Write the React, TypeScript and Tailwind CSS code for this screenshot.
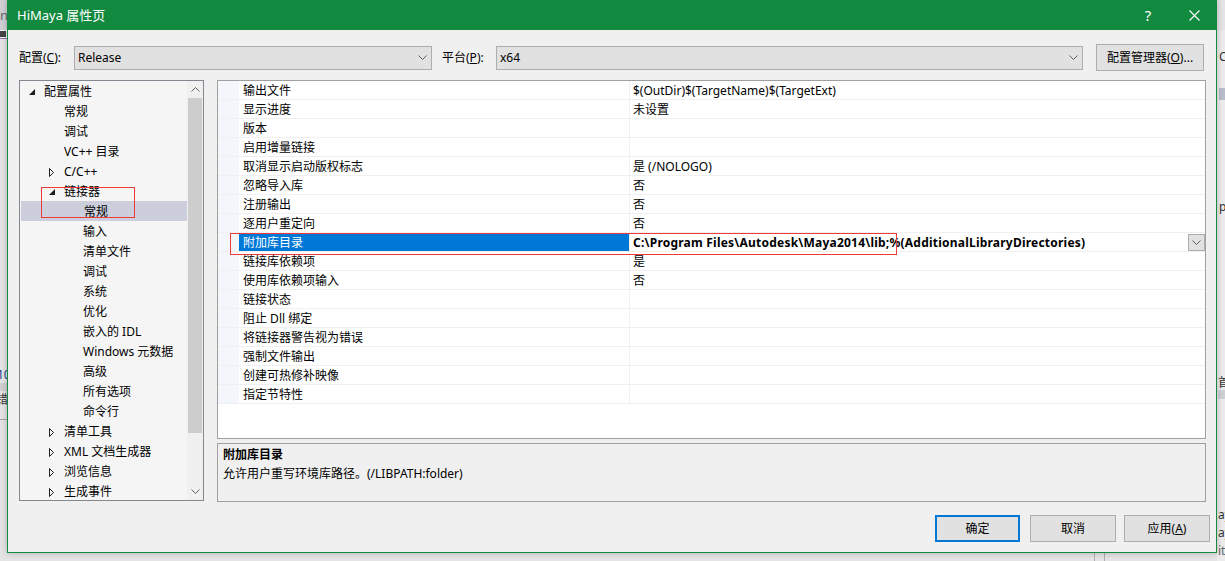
import React from "react";

const FONT = "font-['Noto_Sans','Noto_Sans_CJK_SC',sans-serif]";

type TreeItem = { label: string; level: 1 | 2 | 3; exp?: "open" | "closed"; selected?: boolean };

const tree: TreeItem[] = [
  { label: "配置属性", level: 1, exp: "open" },
  { label: "常规", level: 2 },
  { label: "调试", level: 2 },
  { label: "VC++ 目录", level: 2 },
  { label: "C/C++", level: 2, exp: "closed" },
  { label: "链接器", level: 2, exp: "open" },
  { label: "常规", level: 3, selected: true },
  { label: "输入", level: 3 },
  { label: "清单文件", level: 3 },
  { label: "调试", level: 3 },
  { label: "系统", level: 3 },
  { label: "优化", level: 3 },
  { label: "嵌入的 IDL", level: 3 },
  { label: "Windows 元数据", level: 3 },
  { label: "高级", level: 3 },
  { label: "所有选项", level: 3 },
  { label: "命令行", level: 3 },
  { label: "清单工具", level: 2, exp: "closed" },
  { label: "XML 文档生成器", level: 2, exp: "closed" },
  { label: "浏览信息", level: 2, exp: "closed" },
  { label: "生成事件", level: 2, exp: "closed" },
];

const levelPad: Record<number, string> = { 1: "pl-[9px]", 2: "pl-[29px]", 3: "pl-[48px]" };

const rows: { name: string; value: string; selected?: boolean }[] = [
  { name: "输出文件", value: "$(OutDir)$(TargetName)$(TargetExt)" },
  { name: "显示进度", value: "未设置" },
  { name: "版本", value: "" },
  { name: "启用增量链接", value: "" },
  { name: "取消显示启动版权标志", value: "是 (/NOLOGO)" },
  { name: "忽略导入库", value: "否" },
  { name: "注册输出", value: "否" },
  { name: "逐用户重定向", value: "否" },
  { name: "附加库目录", value: "C:\\Program Files\\Autodesk\\Maya2014\\lib;%(AdditionalLibraryDirectories)", selected: true },
  { name: "链接库依赖项", value: "是" },
  { name: "使用库依赖项输入", value: "否" },
  { name: "链接状态", value: "" },
  { name: "阻止 Dll 绑定", value: "" },
  { name: "将链接器警告视为错误", value: "" },
  { name: "强制文件输出", value: "" },
  { name: "创建可热修补映像", value: "" },
  { name: "指定节特性", value: "" },
];

function ChevronDown({ cls = "" }: { cls?: string }) {
  return (
    <svg width="9" height="5" viewBox="0 0 9 5" className={cls}>
      <path d="M0.5 0.5 L4.5 4.5 L8.5 0.5" fill="none" stroke="#606060" strokeWidth="1" />
    </svg>
  );
}

function OpenTri() {
  return (
    <svg width="6" height="6" viewBox="0 0 6 6">
      <path d="M6 0 L6 6 L0 6 Z" fill="#1e1e1e" />
    </svg>
  );
}

function ClosedTri() {
  return (
    <svg width="5" height="9" viewBox="0 0 5 9">
      <path d="M0.5 0.5 L4.5 4.5 L0.5 8.5 Z" fill="none" stroke="#1e1e1e" strokeWidth="1" />
    </svg>
  );
}

function Combo({ value, w }: { value: string; w: string }) {
  return (
    <div className={`${w} h-[24px] bg-[#e1e1e1] border border-[#adadad] flex items-center pl-[3px] pr-[4px]`}>
      <span className="flex-1 leading-[18px]">{value}</span>
      <ChevronDown />
    </div>
  );
}

function Button({ children, primary }: { children: React.ReactNode; primary?: boolean }) {
  return (
    <div
      className={`h-[27px] flex items-center justify-center bg-[#e1e1e1] ${
        primary ? "border-2 border-[#0078d7] w-[85px]" : "border border-[#adadad] w-[86px]"
      }`}
    >
      <span className="leading-[18px]">{children}</span>
    </div>
  );
}

export default function App() {
  return (
    <div className={`w-[1225px] h-[561px] bg-[#e4e4e4] relative overflow-hidden text-[12px] text-[#000] ${FONT}`}>
      {/* desktop background fragments */}
      <div className="absolute left-0 top-0 w-[8px] h-[30px] bg-[#cfd0d6] text-[#666] text-[13px] leading-[30px]">ni</div>
      <div className="absolute left-0 top-[30px] w-[8px] h-[9px] bg-[#f6f6f6] border-b border-[#9b6ab0]" />
      <div className="absolute left-0 top-[31px] w-[6px] h-[6px] bg-[#444]" />
      <div className="absolute left-0 top-[368px] text-[12px] leading-[14px] text-[#1a3d8f] -ml-[3px]">10</div>
      <div className="absolute left-0 top-[383px] w-[8px] h-[8px] bg-[#cfcfcf]" />
      <div className="absolute left-0 top-[393px] text-[12px] leading-[14px] -ml-[4px] text-[#333]">错</div>
      <div className="absolute left-0 top-[419px] w-[8px] h-[1px] bg-[#a0a0a0]" />
      <div className="absolute right-0 top-[30px] w-[8px] h-[531px] bg-[#ececec]" />
      <div className="absolute left-[1219px] top-[50px] text-[12px] leading-[14px] text-[#333]">C</div>
      <div className="absolute left-[1219px] top-[88px] w-[6px] h-[12px] bg-[#b9bccb]" />
      <div className="absolute left-[1219px] top-[200px] text-[12px] leading-[14px] text-[#333]">p</div>
      <div className="absolute left-[1218px] top-[376px] text-[12px] leading-[14px] text-[#333]">首</div>
      <div className="absolute left-[1218px] top-[390px] w-[7px] h-[9px] bg-[#cfcfd6]" />
      <div className="absolute left-[1218px] top-[508px] text-[12px] leading-[14px] text-[#333]">ay</div>
      <div className="absolute left-[1218px] top-[526px] text-[12px] leading-[14px] text-[#333]">ay</div>
      <div className="absolute left-[1218px] top-[544px] text-[12px] leading-[14px] text-[#666]">it</div>
      <div className="absolute left-[1094px] top-[553px] w-[1px] h-[8px] bg-[#b0b0b0]" />
      <div className="absolute left-[1104px] top-[553px] w-[1px] h-[8px] bg-[#b0b0b0]" />

      {/* dialog window */}
      <div className="relative ml-[7px] w-[1210px] h-[553px] bg-[#f0f0f0] border-x border-b border-[#168a43] flex flex-col shadow-[0_0_6px_rgba(0,0,0,0.25)]">
        {/* title bar */}
        <div className="h-[30px] -mx-[1px] bg-[#11893f] flex items-center text-white">
          <span className="pl-[10px] text-[13px] leading-[18px]">HiMaya 属性页</span>
          <div className="ml-auto flex h-full">
            <div className="w-[46px] h-full flex items-center justify-center text-[15px]">?</div>
            <div className="w-[46px] h-full flex items-center justify-center">
              <svg width="11" height="11" viewBox="0 0 11 11">
                <path d="M0.5 0.5 L10.5 10.5 M10.5 0.5 L0.5 10.5" stroke="#fff" strokeWidth="1.1" />
              </svg>
            </div>
          </div>
        </div>

        {/* config row */}
        <div className="mt-[14px] h-[27px] flex items-center pl-[11px]">
          <span className="leading-[18px] w-[55px]">
            配置(<span className="underline">C</span>):
          </span>
          <Combo value="Release" w="w-[358px]" />
          <span className="ml-[10px] leading-[18px] w-[54px]">
            平台(<span className="underline">P</span>):
          </span>
          <Combo value="x64" w="w-[587px]" />
          <div className="ml-[13px] w-[108px] h-[27px] bg-[#e1e1e1] border border-[#adadad] flex items-center justify-center">
            <span className="leading-[18px]">
              配置管理器(<span className="underline">O</span>)...
            </span>
          </div>
        </div>

        {/* main area */}
        <div className="mt-[9px] flex pl-[11px]">
          {/* tree */}
          <div className="relative w-[185px] h-[421px] border border-[#828790] bg-[#f5f5f5] flex">
            <div className="flex-1 flex flex-col">
              {tree.map((t, i) => (
                <div
                  key={i}
                  className={`h-[20px] flex items-start pt-[2px] ${levelPad[t.level]} ${t.selected ? "bg-[#cccedb] ml-[1px]" : ""}`}
                >
                  <span className="w-[15px] h-[18px] flex items-center">
                    {t.exp === "open" && <OpenTri />}
                    {t.exp === "closed" && <ClosedTri />}
                  </span>
                  <span className="leading-[18px] whitespace-nowrap">{t.label}</span>
                </div>
              ))}
            </div>
            <div className="w-[16px] bg-[#f0f0f0] flex flex-col">
              <div className="h-[17px] flex items-center justify-center">
                <ChevronDown cls="rotate-180" />
              </div>
              <div className="h-[335px] mx-[1px] bg-[#cdcdcd]" />
              <div className="flex-1" />
              <div className="h-[17px] flex items-center justify-center">
                <ChevronDown />
              </div>
            </div>
            <div className="absolute left-[21px] top-[106px] w-[94px] h-[31px] border border-[#f03a3a]" />
          </div>

          {/* right column */}
          <div className="ml-[13px] w-[989px] flex flex-col">
            <div className="relative h-[359px] border border-[#a0a0a0] bg-white">
              {rows.map((r, i) => (
                <div key={i} className="h-[19px] flex border-b border-[#f0f0f0]">
                  <div className="w-[21px] bg-[#f3f6fb]" />
                  <div
                    className={`w-[391px] pl-[4px] pt-[2px] flex items-start border-r border-[#f0f0f0] ${
                      r.selected ? "bg-[#0078d7] text-white" : ""
                    }`}
                  >
                    <span className="leading-[16px] whitespace-nowrap">{r.name}</span>
                  </div>
                  <div className="flex-1 pl-[3px] flex items-center">
                    <span
                      className={`flex-1 pt-[2px] leading-[16px] whitespace-nowrap ${
                        r.selected ? "font-bold tracking-[0.22px]" : ""
                      }`}
                    >
                      {r.value}
                    </span>
                    {r.selected && (
                      <div className="w-[17px] h-[17px] bg-[#e1e1e1] border border-[#adadad] flex items-center justify-center">
                        <ChevronDown />
                      </div>
                    )}
                  </div>
                </div>
              ))}
              <div className="absolute left-[12px] top-[152px] w-[667px] h-[22px] border border-[#f03a3a]" />
            </div>
            <div className="mt-[4px] h-[59px] border border-[#a0a0a0] bg-[#f0f0f0] pl-[5px] pt-[2px]">
              <div className="font-bold leading-[18px]">附加库目录</div>
              <div className="leading-[19px]">允许用户重写环境库路径。(/LIBPATH:folder)</div>
            </div>
          </div>
        </div>

        {/* buttons */}
        <div className="mt-[13px] flex justify-end pr-[6px]">
          <Button primary>确定</Button>
          <div className="ml-[10px]">
            <Button>取消</Button>
          </div>
          <div className="ml-[8px]">
            <Button>
              应用(<span className="underline">A</span>)
            </Button>
          </div>
        </div>
      </div>
    </div>
  );
}
